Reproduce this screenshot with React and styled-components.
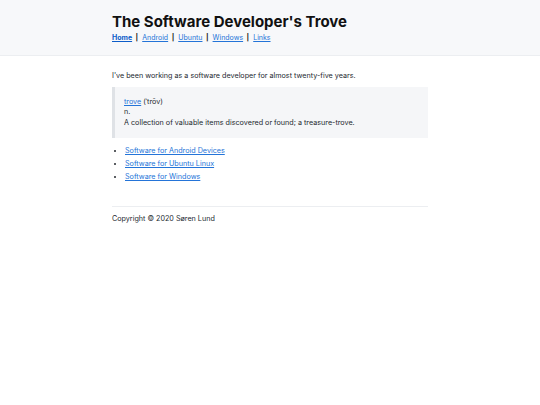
import React from "react";
import styled, { createGlobalStyle } from "styled-components";

const Global = createGlobalStyle`
  html, body { margin: 0; padding: 0; background: #fff; }
  body { font-family: Inter, "Noto Sans", sans-serif; color: #24292f; font-size: 7.2px; line-height: 10.5px; }
  a { color: #2474d8; }
`;

const Header = styled.header`
  background: #f7f8fa;
  border-bottom: 1px solid #eceef1;
  padding: 13px 0 12px;
`;

const Wrap = styled.div`
  width: 316px;
  margin: 0 auto;
`;

const Title = styled.h1`
  margin: 0;
  font-size: 15px;
  font-weight: 700;
  line-height: 18px;
  color: #111;
`;

const Nav = styled.nav`
  margin-top: 2px;
  display: flex;
  align-items: center;
  font-size: 7px;
  line-height: 10px;
`;

const NavLink = styled.a`
  font-weight: ${p => (p.$active ? 700 : 400)};
  color: ${p => (p.$active ? "#0c5cc9" : "#2474d8")};
`;

const Sep = styled.span`
  margin: 0 4px 0 3.5px;
  font-weight: 700;
  color: #222;
`;

const Main = styled.main`
  padding-top: 15px;
`;

const Intro = styled.p`
  margin: 0 0 5px;
`;

const Quote = styled.blockquote`
  margin: 0;
  background: #f5f6f8;
  border-left: 3px solid #dfe2e6;
  padding: 10px 10px 10px 9px;
`;

const List = styled.ul`
  margin: 6px 0 0;
  padding-left: 13px;
  line-height: 13px;
`;

const Footer = styled.footer`
  margin-top: 23px;
  border-top: 1px solid #eceef1;
  padding-top: 7px;
`;

export default function App() {
  return (
    <>
      <Global />
      <Header>
        <Wrap>
          <Title>The Software Developer's Trove</Title>
          <Nav>
            <NavLink href="#" $active>Home</NavLink>
            <Sep>|</Sep>
            <NavLink href="#">Android</NavLink>
            <Sep>|</Sep>
            <NavLink href="#">Ubuntu</NavLink>
            <Sep>|</Sep>
            <NavLink href="#">Windows</NavLink>
            <Sep>|</Sep>
            <NavLink href="#">Links</NavLink>
          </Nav>
        </Wrap>
      </Header>
      <Wrap>
        <Main>
          <Intro>I've been working as a software developer for almost twenty-five years.</Intro>
          <Quote>
            <a href="#">trove</a> (ˈtrōv)<br />
            n.<br />
            A collection of valuable items discovered or found; a treasure-trove.
          </Quote>
          <List>
            <li><a href="#">Software for Android Devices</a></li>
            <li><a href="#">Software for Ubuntu Linux</a></li>
            <li><a href="#">Software for Windows</a></li>
          </List>
        </Main>
        <Footer>Copyright © 2020 Søren Lund</Footer>
      </Wrap>
    </>
  );
}
